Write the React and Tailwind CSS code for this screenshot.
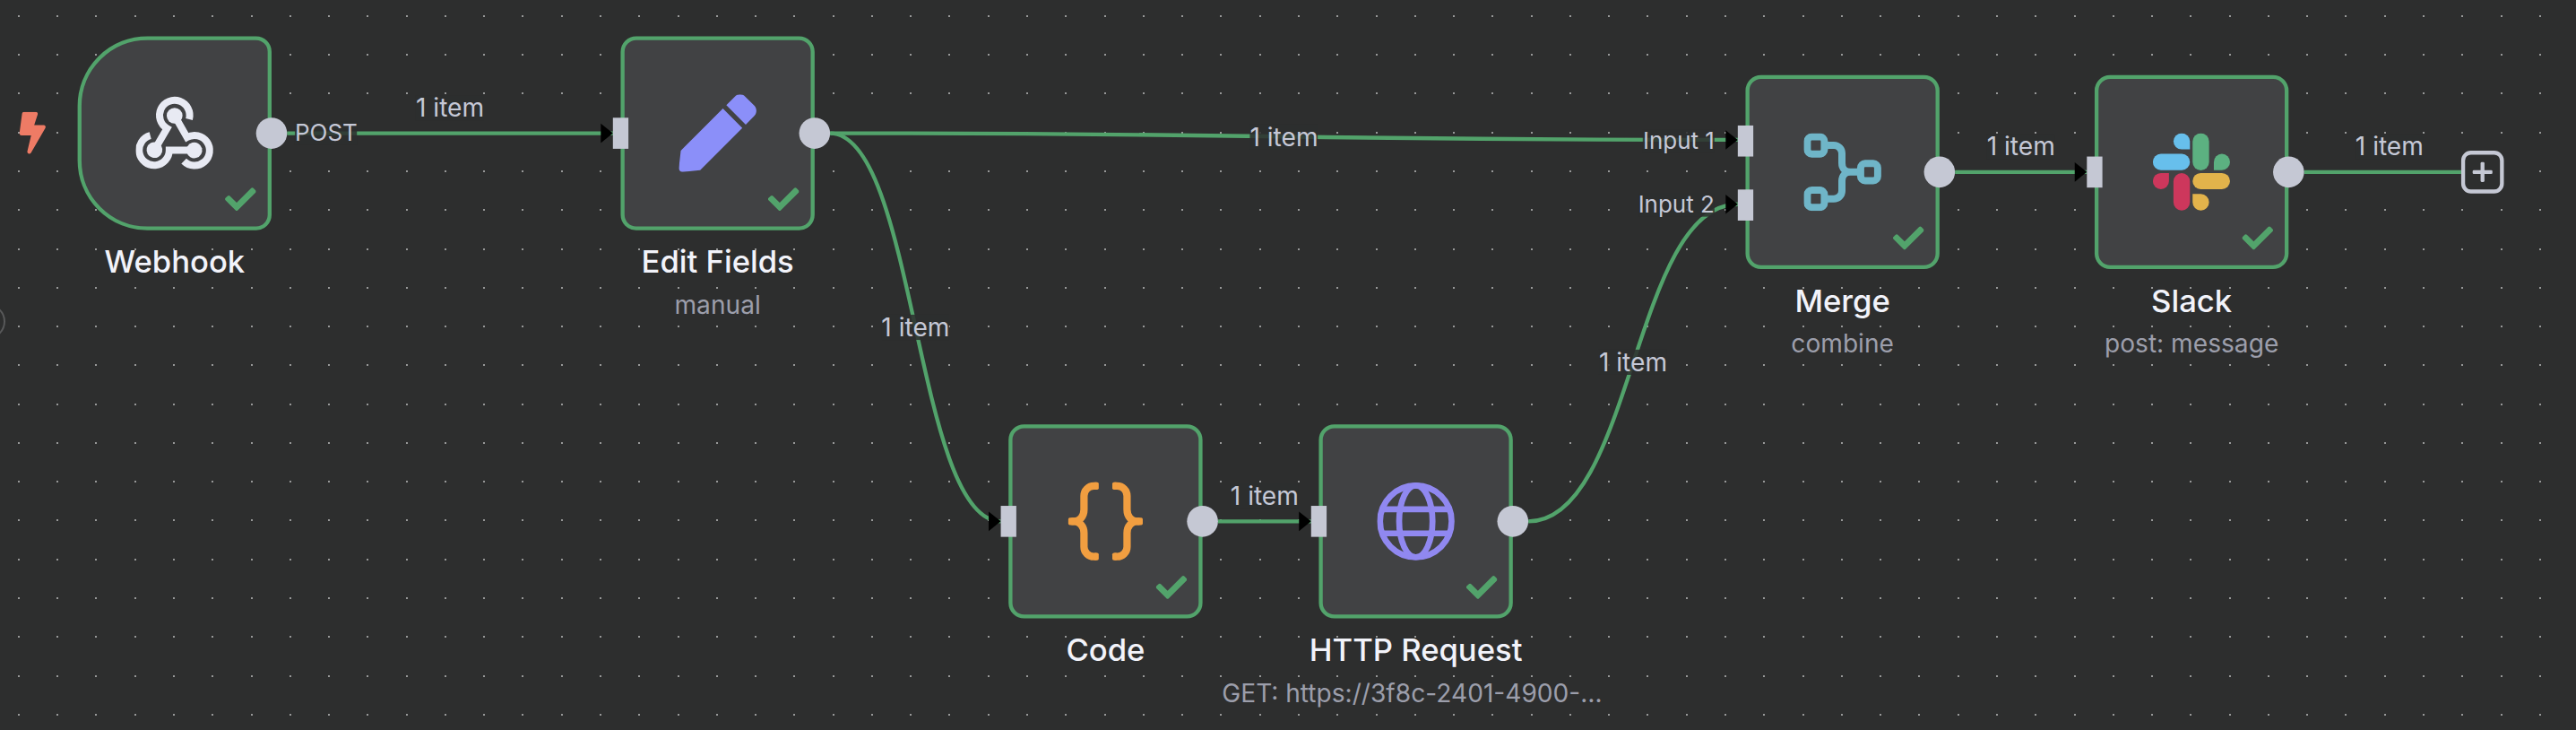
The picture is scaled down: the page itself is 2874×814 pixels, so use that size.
import React from "react";
import { FaBolt, FaCheck, FaPen } from "react-icons/fa";

const GRID_STEP = 43.277;

function DotGrid() {
  let d = "";
  for (let row = 0; row < 19; row++) {
    for (let col = 0; col < 66; col++) {
      const x = Math.round(19.85 + col * GRID_STEP);
      const y = Math.round(16.85 + row * GRID_STEP);
      d += `M${x} ${y}h2v2h-2z`;
    }
  }
  return (
    <svg className="absolute inset-0 h-full w-full" aria-hidden="true">
      <path d={d} className="fill-[#979898]" />
    </svg>
  );
}

function WebhookIcon() {
  const arm = (
    <>
      <path
        d="M633.8 397.1A50.5 50.5 0 1 0 559.75 427.7L517 501"
        fill="none"
        stroke="#e8eaf3"
        strokeWidth="24"
      />
      <circle cx="585" cy="385" r="26.5" fill="#e8eaf3" />
    </>
  );
  return (
    <svg viewBox="455 314 260 260" className="size-10">
      <g>{arm}</g>
      <g transform="rotate(120 584.5 462)">{arm}</g>
      <g transform="rotate(240 584.5 462)">{arm}</g>
    </svg>
  );
}

function CodeIcon() {
  const brace = (
    <>
      <path
        d="M15.4 1.8H14a5.1 5.1 0 0 0-5.1 5.1V14C8.9 17.6 6.6 20 3.6 20H2.4M3.6 20C6.6 20 8.9 22.4 8.9 26V33.1a5.1 5.1 0 0 0 5.1 5.1H15.4"
        fill="none"
        stroke="#f19e40"
        strokeWidth="3.8"
      />
      <rect x="13.8" y="-0.1" width="2.7" height="3.8" rx="0.8" fill="#f19e40" />
      <rect x="13.8" y="36.3" width="2.7" height="3.8" rx="0.8" fill="#f19e40" />
      <rect x="0.8" y="18.1" width="3.6" height="3.8" rx="0.8" fill="#f19e40" />
    </>
  );
  return (
    <svg viewBox="0 0 40 40" className="size-10 overflow-visible">
      {brace}
      <g transform="translate(40 0) scale(-1 1)">{brace}</g>
    </svg>
  );
}

function GlobeIcon() {
  return (
    <svg viewBox="0 0 40 40" className="size-10" fill="none" stroke="#9088f0" strokeWidth="3.1">
      <circle cx="20" cy="20" r="18.45" />
      <ellipse cx="20" cy="20" rx="8.6" ry="18.45" />
      <path d="M3 13.8H37M3 26.2H37" />
    </svg>
  );
}

function MergeIcon() {
  return (
    <svg viewBox="0 0 40 40" className="size-10" fill="none" stroke="#6fb5c8" strokeWidth="3.7">
      <rect x="1.85" y="1.85" width="8.8" height="8.8" rx="2.3" />
      <rect x="1.85" y="29.35" width="8.8" height="8.8" rx="2.3" />
      <rect x="29.35" y="15.6" width="8.8" height="8.8" rx="2.3" />
      <path d="M12 6.2H15.5a4.2 4.2 0 0 1 4.2 4.2V15.4C19.7 18 21.5 20 24 20H28M12 33.8H15.5a4.2 4.2 0 0 0 4.2-4.2V24.6C19.7 22 21.5 20 24 20" />
    </svg>
  );
}

function SlackIcon() {
  return (
    <svg viewBox="756 57 258 258" className="size-[39.8px]">
      <g fill="#67bfec">
        <rect x="756" y="126" width="124" height="54" rx="27" />
        <path d="M852.5 57a27.5 27 0 0 1 27.5 27V111H852.5a27.5 27 0 0 1 0-54z" />
      </g>
      <g fill="#5cb181">
        <rect x="889" y="57" width="55" height="124" rx="27.5" />
        <path d="M987 126a27 27 0 0 1 0 54H960V153a27 27 0 0 1 27-27z" />
      </g>
      <g fill="#cd375c">
        <rect x="825" y="190" width="55" height="125" rx="27.5" />
        <path d="M783 190H810V217a27 27 0 1 1-27-27z" />
      </g>
      <g fill="#e2b34b">
        <rect x="889" y="190" width="125" height="54" rx="27" />
        <path d="M889 260H916.5a27.5 27.5 0 1 1-27.5 27.5z" />
      </g>
    </svg>
  );
}

const nodes = [
  {
    name: "Webhook",
    place: "left-0 top-0",
    corners: "rounded-l-[36px] rounded-r-lg",
    icon: <WebhookIcon />,
    inputs: [],
    trigger: true,
  },
  {
    name: "Edit Fields",
    subtitle: "manual",
    place: "left-[280px] top-0",
    corners: "rounded-lg",
    icon: <FaPen className="size-10 text-[#8b8ff9]" />,
    inputs: ["top-[42px]"],
  },
  {
    name: "Code",
    place: "left-[480px] top-[200px]",
    corners: "rounded-lg",
    icon: <CodeIcon />,
    inputs: ["top-[42px]"],
  },
  {
    name: "HTTP Request",
    subtitle: "GET: https://3f8c-2401-4900-…",
    subtitleAlign: "text-left",
    place: "left-[640px] top-[200px]",
    corners: "rounded-lg",
    icon: <GlobeIcon />,
    inputs: ["top-[42px]"],
  },
  {
    name: "Merge",
    subtitle: "combine",
    place: "left-[860px] top-[20px]",
    corners: "rounded-lg",
    icon: <MergeIcon />,
    inputs: ["top-[25.5px]", "top-[58.5px]"],
  },
  {
    name: "Slack",
    subtitle: "post: message",
    place: "left-[1040px] top-[20px]",
    corners: "rounded-lg",
    icon: <SlackIcon />,
    inputs: ["top-[42px]"],
  },
];

function WorkflowNode({ node }) {
  return (
    <div className={`absolute flex w-[100px] flex-col items-center gap-1.5 ${node.place}`}>
      <div
        className={`flex h-[100px] w-full items-center justify-center border-2 border-[#52a36b] bg-[#414244] ${node.corners}`}
      >
        {node.icon}
      </div>
      <div className="flex w-[200px] shrink-0 flex-col gap-[3.2px] text-center whitespace-nowrap">
        <div className="text-base leading-5 font-medium text-[#f2f3fa]">{node.name}</div>
        {node.subtitle && (
          <div className={`text-[13px] leading-[18px] text-[#9c9eab] ${node.subtitleAlign || "text-center"}`}>
            {node.subtitle}
          </div>
        )}
      </div>
      <FaCheck className="absolute top-[76px] right-2 size-4 text-[#52a36b]" />
      {node.trigger && (
        <FaBolt className="absolute top-[39.2px] -left-[29.6px] h-[21.6px] w-[13.5px] text-[#ee7b65]" />
      )}
      {node.inputs.map((top) => (
        <div key={top} className={`absolute -left-1 h-4 w-2 bg-[#c5c8d4] ${top}`} />
      ))}
      <div className="absolute top-[42px] -right-2 size-4 rounded-full bg-[#c5c8d4]" />
    </div>
  );
}

const edges = [
  "M108 50H276",
  "M388 50C622 50 622 53.4 856 53.4",
  "M388 50C432 50 432 250 476 250",
  "M588 250H636",
  "M748 250C802 250 802 86.6 856 86.6",
  "M968 70H1036",
];

function Edges() {
  return (
    <svg className="h-full w-full overflow-visible" fill="none">
      <defs>
        <marker
          id="arrow"
          viewBox="-10 -10 20 20"
          markerWidth="12.5"
          markerHeight="12.5"
          refX="0"
          refY="0"
          orient="auto-start-reverse"
          markerUnits="strokeWidth"
        >
          <path d="M-5 -4L0 0L-5 4Z" fill="#000" />
        </marker>
      </defs>
      {edges.map((d) => (
        <path key={d} d={d} stroke="#52a36b" strokeWidth="2" markerEnd="url(#arrow)" />
      ))}
      <path d="M1148 70H1229" stroke="#52a36b" strokeWidth="2" />
      <rect x="1230" y="60" width="20" height="20" rx="4" stroke="#c5c8d4" strokeWidth="2" />
      <g fill="#c5c8d4">
        <rect x="1234.9" y="69" width="10.2" height="2" rx="0.6" />
        <rect x="1239" y="64.9" width="2" height="10.2" rx="0.6" />
      </g>
    </svg>
  );
}

const labels = [
  { text: "1 item", place: "left-[192px] top-[37px] -translate-x-1/2 text-[13px]" },
  { text: "1 item", place: "left-[622px] top-[51.7px] -translate-x-1/2 text-[13px]" },
  { text: "1 item", place: "left-[432px] top-[150px] -translate-x-1/2 text-[13px]" },
  { text: "1 item", place: "left-[612px] top-[237px] -translate-x-1/2 text-[13px]" },
  { text: "1 item", place: "left-[802px] top-[168.4px] -translate-x-1/2 text-[13px]" },
  { text: "1 item", place: "left-[1002px] top-[57px] -translate-x-1/2 text-[13px]" },
  { text: "1 item", place: "left-[1192px] top-[57px] -translate-x-1/2 text-[13px]" },
  { text: "POST", place: "left-[112px] top-[50px] text-xs" },
  { text: "Input 1", place: "right-[456px] top-[53.5px] text-xs" },
  { text: "Input 2", place: "right-[456px] top-[86.5px] text-xs" },
];

export default function App() {
  return (
    <div className="relative h-[814px] w-full overflow-hidden bg-[#2d2e2e] font-['Inter',sans-serif]">
      <DotGrid />
      <div className="absolute top-[338.5px] -left-[33px] size-[39px] rounded-full border-2 border-[#58595a]" />
      <div className="absolute top-0 left-0 h-[340px] w-[1300px] origin-top-left translate-x-[86.6px] translate-y-[40.4px] scale-[2.1638]">
        <Edges />
        {nodes.map((node) => (
          <WorkflowNode key={node.name} node={node} />
        ))}
        {labels.map(({ text, place }) => (
          <div
            key={place}
            className={`absolute -translate-y-1/2 bg-[#2d2e2e]/85 leading-none whitespace-nowrap text-[#c5c8d6] ${place}`}
          >
            {text}
          </div>
        ))}
      </div>
    </div>
  );
}
